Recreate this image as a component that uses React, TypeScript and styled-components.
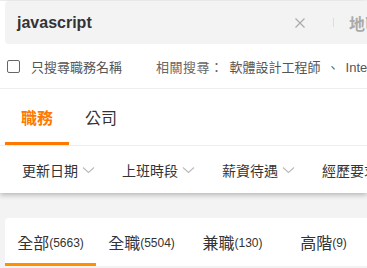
import React from "react";
import styled, { createGlobalStyle } from "styled-components";

const GlobalStyle = createGlobalStyle`
  body {
    margin: 0;
    background: #f3f3f3;
    font-family: "Liberation Sans", "Noto Sans CJK TC", sans-serif;
    color: #333;
    overflow: hidden;
  }
`;

const Page = styled.div`
  width: 367px;
  height: 268px;
  overflow: hidden;
`;

const Header = styled.div`
  width: 367px;
  background: #fff;
  box-shadow: 0 2px 5px rgba(0, 0, 0, 0.25);
  position: relative;
  z-index: 1;
`;

const SearchBar = styled.div`
  display: flex;
  align-items: center;
  width: 420px;
  height: 43px;
  margin: 1px 0 0 5px;
  padding-left: 12px;
  background: #f3f3f3;
  border-radius: 4px;
  box-sizing: border-box;
`;

const Query = styled.div`
  width: 276px;
  flex-shrink: 0;
  font-size: 16px;
  font-weight: bold;
  color: #333;
`;

const ClearButton = styled.span`
  display: flex;
  flex-shrink: 0;
  width: 14px;
  height: 14px;
  align-items: center;
  justify-content: center;
`;

const Divider = styled.span`
  flex-shrink: 0;
  width: 1px;
  height: 9px;
  margin: 0 15px 0 26px;
  background: #ddd;
`;

const Area = styled.span`
  flex-shrink: 0;
  font-size: 16px;
  font-weight: bold;
  color: #aaa;
`;

const OptionRow = styled.div`
  display: flex;
  align-items: center;
  height: 44px;
  padding-left: 7px;
  border-bottom: 1px solid #eee;
  font-size: 13px;
  color: #555;
  white-space: nowrap;
`;

const Checkbox = styled.span`
  flex-shrink: 0;
  width: 11px;
  height: 11px;
  border: 1px solid #666;
  border-radius: 2px;
  margin-right: 11px;
`;

const Related = styled.span`
  margin-left: 34px;
  color: #666;
  letter-spacing: 0.5px;
`;

const Keyword = styled.span`
  margin-left: 6px;
`;

const TabRow = styled.div`
  display: flex;
  height: 56px;
  padding-left: 5px;
  border-bottom: 1px solid #eee;
`;

const MainTab = styled.div<{ $active?: boolean }>`
  width: 64px;
  display: flex;
  align-items: center;
  justify-content: center;
  font-size: 16px;
  font-weight: ${(p) => (p.$active ? "bold" : "normal")};
  color: ${(p) => (p.$active ? "#ff7800" : "#333")};
  box-shadow: ${(p) => (p.$active ? "inset 0 -3px 0 #ff7800" : "none")};
`;

const FilterRow = styled.div`
  display: flex;
  height: 47px;
  align-items: center;
  padding-left: 22px;
  white-space: nowrap;
`;

const Filter = styled.div`
  display: flex;
  align-items: center;
  flex: 0 0 100px;
  font-size: 14px;
  color: #333;
  gap: 4px;
`;

const Body = styled.div`
  padding: 25px 0 0 5px;
`;

const JobTabs = styled.div`
  display: flex;
  width: 400px;
  height: 48px;
  background: #fff;
  border-radius: 4px 0 0 0;
`;

const JobTab = styled.div<{ $active?: boolean }>`
  flex: 0 0 91px;
  display: flex;
  align-items: center;
  justify-content: center;
  font-size: 16px;
  color: #333;
  white-space: nowrap;
  box-shadow: ${(p) => (p.$active ? "inset 0 -3px 0 #ff9100" : "none")};
  & small {
    font-size: 12px;
    margin-top: 2px;
  }
`;

const Chevron = () => (
  <svg width="13" height="8" viewBox="0 0 13 8">
    <path d="M1 1.5 L6.5 6.5 L12 1.5" fill="none" stroke="#bbb" strokeWidth="1.1" />
  </svg>
);

const filters = ["更新日期", "上班時段", "薪資待遇", "經歷要求"];
const jobTabs = [
  { name: "全部", count: 5663 },
  { name: "全職", count: 5504 },
  { name: "兼職", count: 130 },
  { name: "高階", count: 9 },
];

export default function App() {
  return (
    <Page>
      <GlobalStyle />
      <Header>
        <SearchBar>
          <Query>javascript</Query>
          <ClearButton>
            <svg width="10" height="10" viewBox="0 0 10 10">
              <path d="M0.5 0.5 L9.5 9.5 M9.5 0.5 L0.5 9.5" stroke="#aaa" strokeWidth="1.2" />
            </svg>
          </ClearButton>
          <Divider />
          <Area>地區</Area>
        </SearchBar>
        <OptionRow>
          <Checkbox />
          只搜尋職務名稱
          <Related>相關搜尋：</Related>
          <Keyword>軟體設計工程師</Keyword>
          <Keyword>、</Keyword>
          <Keyword>Internet程式設計師</Keyword>
        </OptionRow>
        <TabRow>
          <MainTab $active>職務</MainTab>
          <MainTab>公司</MainTab>
        </TabRow>
        <FilterRow>
          {filters.map((f) => (
            <Filter key={f}>
              {f}
              <Chevron />
            </Filter>
          ))}
        </FilterRow>
      </Header>
      <Body>
        <JobTabs>
          {jobTabs.map((t, i) => (
            <JobTab key={t.name} $active={i === 0}>
              {t.name}
              <small>({t.count})</small>
            </JobTab>
          ))}
        </JobTabs>
      </Body>
    </Page>
  );
}
